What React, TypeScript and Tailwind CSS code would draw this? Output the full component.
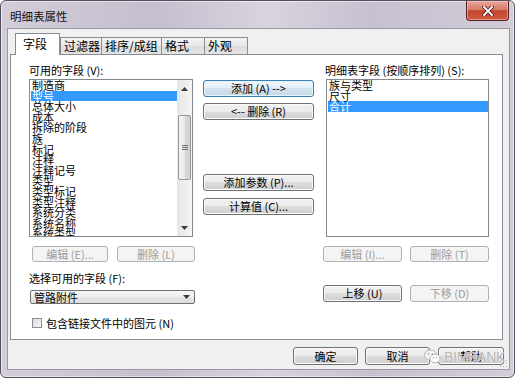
import React from 'react';
import clsx from 'clsx';

type BtnProps = {
  children: React.ReactNode;
  className?: string;
  disabled?: boolean;
  primary?: boolean;
};

const WinButton: React.FC<BtnProps> = ({ children, className, disabled, primary }) => (
  <div
    className={clsx(
      'flex shrink-0 items-center justify-center rounded-[3px] border text-[11px] leading-none whitespace-nowrap',
      disabled
        ? 'border-[#adb2b5] bg-[#f4f4f4] text-[#9c9c9c]'
        : primary
          ? 'border-[#3c7fb1] bg-[linear-gradient(#eef6fb,#e2eef6_50%,#d3e3ee_50%,#c6d9e8)] text-black shadow-[inset_0_0_0_1px_#e4f3fc]'
          : 'border-[#707070] bg-[linear-gradient(#f2f2f2,#ebebeb_50%,#dddddd_50%,#cfcfcf)] text-black shadow-[inset_0_0_0_1px_#fbfbfb]',
      className
    )}
  >
    {children}
  </div>
);

const Arrow: React.FC<{ down?: boolean }> = ({ down }) => (
  <svg width="7" height="4" viewBox="0 0 7 4">
    <path d={down ? 'M0 0 L7 0 L3.5 4 Z' : 'M0 4 L3.5 0 L7 4 Z'} fill="#3c3c3c" />
  </svg>
);

const ScrollBar: React.FC = () => (
  <div className="flex w-[15px] flex-col bg-[linear-gradient(90deg,#e6e6e6,#f5f5f5)]">
    <div className="flex h-[17px] items-center justify-center">
      <Arrow />
    </div>
    <div className="flex-1">
      <div className="mx-px mt-[18px] flex h-[65px] items-center justify-center rounded-[2px] border border-[#979797] bg-[linear-gradient(90deg,#f4f4f4,#e9e9e9_50%,#d9d9d9_50%,#d2d2d2)]">
        <div className="flex flex-col gap-[1px]">
          <div className="h-px w-[6px] bg-[#707070]" />
          <div className="h-px w-[6px] bg-[#707070]" />
          <div className="h-px w-[6px] bg-[#707070]" />
        </div>
      </div>
    </div>
    <div className="flex h-[17px] items-center justify-center">
      <Arrow down />
    </div>
  </div>
);

const ListBox: React.FC<{ items: string[]; selected: number; scroll?: boolean; className?: string }> = ({
  items,
  selected,
  scroll,
  className,
}) => (
  <div className={clsx('flex overflow-hidden border border-[#828790] bg-white', className)}>
    <div className="flex-1 overflow-hidden pl-px">
      {items.map((item, i) => (
        <div
          key={item}
          className={clsx(
            'h-[10.6px] pl-[1px] text-[11px] leading-[10.6px] whitespace-nowrap',
            i === selected ? 'bg-[#3399ff] text-white' : 'text-black'
          )}
        >
          {item}
        </div>
      ))}
    </div>
    {scroll && <ScrollBar />}
  </div>
);

const tabs = ['字段', '过滤器', '排序/成组', '格式', '外观'];
const tabWidths = ['w-[45px]', 'w-[42px]', 'w-[61px]', 'w-[44px]', 'w-[44px]'];

const available = [
  '制造商',
  '型号',
  '总体大小',
  '成本',
  '拆除的阶段',
  '族',
  '标记',
  '注释',
  '注释记号',
  '类型',
  '类型标记',
  '类型注释',
  '系统分类',
  '系统名称',
  '系统类型',
];

const scheduled = ['族与类型', '尺寸', '合计'];

const App: React.FC = () => {
  return (
    <div className="h-[382px] w-[520px] bg-white font-['Noto_Sans_CJK_SC',sans-serif]">
      <div className="flex h-[378px] w-[515px] flex-col rounded-[6px] border border-[#55505e] bg-[linear-gradient(90deg,#d3cdd9,#c5bece_30%,#d9d3df_52%,#c7c0d0_72%,#d2ccd8)] shadow-[inset_0_0_0_1px_rgba(255,255,255,0.5)]">
        {/* title bar */}
        <div className="flex h-[27px] items-start justify-between">
          <div className="pl-[9px] pt-[7px] text-[11.5px] leading-[16px] text-[#111]">明细表属性</div>
          <div className="mr-[5px] flex h-[20px] w-[43px] items-center justify-center rounded-b-[4px] border border-t-0 border-[#5a2020] bg-[linear-gradient(#eaa99b,#d77a68_45%,#c2452c_52%,#cf5a3e)] shadow-[inset_0_0_0_1px_rgba(255,210,200,0.5)]">
            <svg width="12" height="10" viewBox="0 0 12 10">
              <path d="M2 1 L10 9 M10 1 L2 9" stroke="#4a1410" strokeWidth="3.6" strokeLinecap="square" />
              <path d="M2 1 L10 9 M10 1 L2 9" stroke="#ffffff" strokeWidth="2" strokeLinecap="square" />
            </svg>
          </div>
        </div>

        {/* client area */}
        <div className="relative ml-[6px] mr-[4px] flex flex-1 flex-col border border-[#9a96a3] bg-[#f0f0f0]">
          {/* tabs */}
          <div className="flex h-[25px] items-end pl-[7px]">
            {tabs.map((t, i) => (
              <div
                key={t}
                className={clsx(
                  'flex items-center border-x border-t border-[#898c95] text-[12px] leading-none whitespace-nowrap text-black',
                  tabWidths[i],
                  i === 0
                    ? 'relative z-10 -mb-px h-[22px] bg-white pb-[2px] pl-[7px]'
                    : 'h-[17px] bg-[linear-gradient(#f3f3f3,#e8e8e8_50%,#dcdcdc_50%,#e4e4e4)] pl-[3px]',
                  i > 1 && '-ml-px'
                )}
              >
                {t}
              </div>
            ))}
          </div>

          {/* tab panel */}
          <div className="ml-[2px] mr-[6px] flex h-[286px] border border-[#898c95] bg-white pl-[18px] pt-[9px]">
            {/* left column */}
            <div className="flex w-[166px] flex-col">
              <div className="h-[13px] text-[11px] leading-[13px] text-black">可用的字段 (V):</div>
              <ListBox items={available} selected={1} scroll className="mt-[2px] h-[158px] w-[164px]" />
              <div className="mt-[9px] flex h-[16px] pl-[3px]">
                <WinButton disabled className="w-[76px]">编辑 (E)...</WinButton>
                <WinButton disabled className="ml-[9px] w-[78px]">删除 (L)</WinButton>
              </div>
              <div className="mt-[10px] h-[13px] text-[11px] leading-[13px] text-black">选择可用的字段 (F):</div>
              <div className="mt-[5px] ml-px flex h-[14px] w-[165px] items-center justify-between rounded-[2px] border border-[#707070] bg-[linear-gradient(#f7f7f7,#efefef_50%,#e5e5e5_50%,#dedede)] pl-[3px] pr-[4px]">
                <span className="text-[11px] leading-none text-black">管路附件</span>
                <Arrow down />
              </div>
              <div className="mt-[14px] flex h-[10px] items-center pl-[3px]">
                <div className="h-[10px] w-[10px] border border-[#8f8f8f] bg-[linear-gradient(135deg,#dcdcdc,#f6f6f6)]" />
                <span className="ml-[4px] text-[11px] leading-[10px] text-black">包含链接文件中的图元 (N)</span>
              </div>
            </div>

            {/* middle column */}
            <div className="ml-[8px] flex w-[111px] flex-col pt-[16px]">
              <WinButton primary className="h-[17px]">添加 (A) --&gt;</WinButton>
              <WinButton className="mt-[6px] h-[17px]">&lt;-- 删除 (R)</WinButton>
              <WinButton className="mt-[54px] h-[17px]">添加参数 (P)...</WinButton>
              <WinButton className="mt-[7px] h-[17px]">计算值 (C)...</WinButton>
            </div>

            {/* right column */}
            <div className="ml-[9px] flex w-[166px] flex-col">
              <div className="h-[13px] pl-[2px] text-[11px] leading-[13px] whitespace-nowrap text-black">
                明细表字段 (按顺序排列) (S):
              </div>
              <ListBox items={scheduled} selected={2} className="mt-[2px] ml-[3px] h-[158px] w-[163px]" />
              <div className="mt-[9px] flex h-[16px]">
                <WinButton disabled className="w-[79px]">编辑 (I)...</WinButton>
                <WinButton disabled className="ml-[8px] w-[79px]">删除 (T)</WinButton>
              </div>
              <div className="mt-[23px] flex h-[17px]">
                <WinButton className="w-[79px]">上移 (U)</WinButton>
                <WinButton disabled className="ml-[8px] w-[79px]">下移 (D)</WinButton>
              </div>
            </div>
          </div>

          {/* dialog buttons */}
          <div className="relative mt-[7px] flex h-[18px] justify-end pr-[5px]">
            <WinButton className="w-[65px]">确定</WinButton>
            <WinButton className="ml-[7px] w-[65px]">取消</WinButton>
            <WinButton className="ml-[8px] w-[66px]">帮助</WinButton>
            {/* watermark */}
            <div className="absolute right-[4px] top-[2px] flex items-center gap-[3px]">
              <svg width="17" height="15" viewBox="0 0 17 15">
                <ellipse cx="6.5" cy="6" rx="6" ry="5" fill="#f4f4f4" stroke="#b4b4b4" strokeWidth="1" />
                <ellipse cx="11" cy="9.5" rx="5" ry="4.2" fill="#ffffff" stroke="#b4b4b4" strokeWidth="1" />
                <circle cx="4.5" cy="4.8" r="0.9" fill="#9c9c9c" />
                <circle cx="8.3" cy="4.8" r="0.9" fill="#9c9c9c" />
                <circle cx="9.5" cy="8.8" r="0.7" fill="#9c9c9c" />
                <circle cx="12.6" cy="8.8" r="0.7" fill="#9c9c9c" />
              </svg>
              <span className="font-['Liberation_Sans',sans-serif] text-[14px] leading-none tracking-[-0.3px] text-[#b3b3b3] [text-shadow:0_0_1px_#ffffff,0_0_1px_#ffffff]">
                BIMBANK
              </span>
            </div>
          </div>

          {/* size grip */}
          <div className="absolute bottom-[1px] right-[1px]">
            <svg width="8" height="8" viewBox="0 0 8 8">
              <rect x="6" y="0" width="1" height="1" fill="#b0b0b0" />
              <rect x="3" y="3" width="1" height="1" fill="#b0b0b0" />
              <rect x="6" y="3" width="1" height="1" fill="#b0b0b0" />
              <rect x="0" y="6" width="1" height="1" fill="#b0b0b0" />
              <rect x="3" y="6" width="1" height="1" fill="#b0b0b0" />
              <rect x="6" y="6" width="1" height="1" fill="#b0b0b0" />
            </svg>
          </div>
        </div>
        <div className="h-[7px]" />
      </div>
    </div>
  );
};

export default App;
